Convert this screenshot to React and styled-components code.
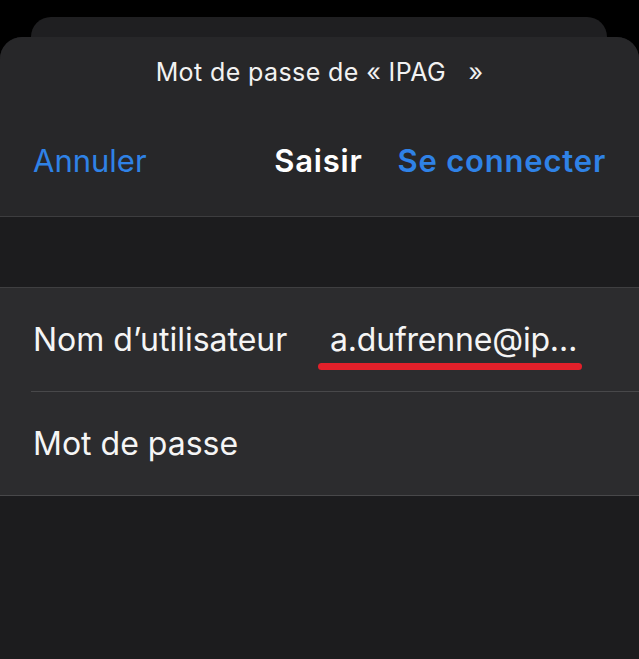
import React from 'react';
import styled, { createGlobalStyle } from 'styled-components';

const GlobalStyle = createGlobalStyle`
  html, body {
    margin: 0;
    padding: 0;
    background: #000000;
  }
  body {
    font-family: Inter, "Noto Sans", "Liberation Sans", sans-serif;
    -webkit-font-smoothing: antialiased;
  }
`;

const Screen = styled.div`
  width: 639px;
  height: 659px;
  overflow: hidden;
  padding-top: 17px;
  box-sizing: border-box;
  display: flex;
  flex-direction: column;
  background: #000000;
`;

const BackSheet = styled.div`
  height: 20px;
  margin: 0 32px 0 31px;
  border-radius: 22px 22px 0 0;
  background: #1f1f21;
  flex-shrink: 0;
`;

const Sheet = styled.div`
  flex: 1;
  display: flex;
  flex-direction: column;
  border-radius: 22px 22px 0 0;
  background: #1c1c1e;
  overflow: hidden;
`;

/**
 * Header
 */

const Header = styled.div`
  height: 180px;
  box-sizing: border-box;
  background: #272729;
  border-bottom: 1px solid #3d3d3f;
  display: flex;
  flex-direction: column;
`;

const Title = styled.div`
  height: 70px;
  display: flex;
  align-items: center;
  justify-content: center;
  color: #f2f2f2;
  font-size: 25px;
  letter-spacing: 0.4px;
  white-space: pre;
`;

const NavBar = styled.div`
  flex: 1;
  display: flex;
  align-items: center;
  justify-content: space-between;
  padding: 0 33px 2px 33px;
`;

const NavButton = styled.span`
  font-size: 31px;
  font-weight: ${(props) => (props.bold ? 600 : 400)};
  color: ${(props) => props.color};
  letter-spacing: ${(props) => (props.bold ? '0.8px' : '0')};
`;

const NavRight = styled.div`
  display: flex;
  align-items: center;
  gap: 35px;
`;

/**
 * Form
 */

const Spacer = styled.div`
  height: 70px;
  flex-shrink: 0;
`;

const Group = styled.div`
  background: #2c2c2e;
  border-top: 1px solid #3f3f41;
  border-bottom: 1px solid #48484a;
`;

const Row = styled.div`
  height: 103px;
  display: flex;
  align-items: center;
  padding-left: 33px;
  box-sizing: border-box;
`;

const Separator = styled.div`
  height: 1px;
  margin-left: 31px;
  background: #48484a;
`;

const Label = styled.span`
  width: 297px;
  flex-shrink: 0;
  font-size: 32px;
  color: #f5f5f5;
`;

const Value = styled.span`
  position: relative;
  font-size: 32px;
  letter-spacing: -0.2px;
  color: #f5f5f5;
`;

const RedMark = styled.span`
  position: absolute;
  left: -12px;
  right: -5px;
  top: 43px;
  height: 7px;
  border-radius: 4px;
  background: #e3202a;
`;

function App() {
  return (
    <>
      <GlobalStyle />
      <Screen>
        <BackSheet />
        <Sheet>
          <Header>
            <Title>Mot de passe de « IPAG   »</Title>
            <NavBar>
              <NavButton color="#2f82e6">Annuler</NavButton>
              <NavRight>
                <NavButton bold color="#ffffff">Saisir</NavButton>
                <NavButton bold color="#2f82e6">Se connecter</NavButton>
              </NavRight>
            </NavBar>
          </Header>
          <Spacer />
          <Group>
            <Row>
              <Label>Nom d’utilisateur</Label>
              <Value>
                a.dufrenne@ip…
                <RedMark />
              </Value>
            </Row>
            <Separator />
            <Row>
              <Label>Mot de passe</Label>
            </Row>
          </Group>
        </Sheet>
      </Screen>
    </>
  );
}

export default App;
